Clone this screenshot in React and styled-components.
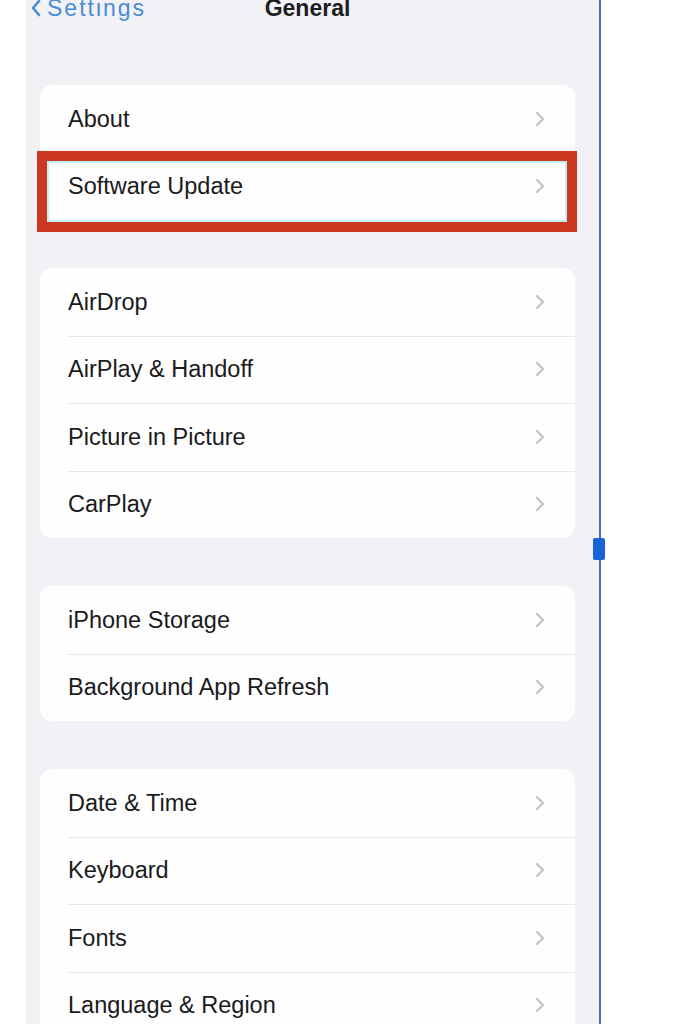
import React from 'react';
import styled, { createGlobalStyle, css } from 'styled-components';

const GlobalStyle = createGlobalStyle`
  html, body {
    margin: 0;
    padding: 0;
    background: #ffffff;
    font-family: 'Liberation Sans', Arial, sans-serif;
  }
`;

const PageStyled = styled.div`
  display: flex;
  height: 1024px;
  padding-left: 26px;
  overflow: hidden;
  background: #ffffff;
`;

const ScreenStyled = styled.div`
  position: relative;
  width: 575px;
  box-sizing: border-box;
  padding: 0 24px 0 14px;
  background: #f2f2f6;
  border-right: 2px solid #3f74b0;
`;

const HandleStyled = styled.div`
  position: absolute;
  top: 538px;
  right: -6px;
  width: 12px;
  height: 22px;
  border-radius: 2px;
  background: #1b63d9;
`;

const HeaderStyled = styled.header`
  display: grid;
  grid-template-columns: 1fr auto 1fr;
  align-items: center;
  height: 24px;
  margin-top: -4px;
  line-height: 24px;
  font-size: 23px;
`;

const BackStyled = styled.div`
  display: flex;
  align-items: center;
  gap: 6px;
  margin-left: -9px;
  color: #4a8bd6;
  letter-spacing: 2px;
`;

const TitleStyled = styled.div`
  font-weight: 700;
  color: #1d1d1f;
`;

const ListStyled = styled.div`
  display: flex;
  flex-direction: column;
  gap: 48px;
  margin-top: 65px;
`;

const CardStyled = styled.section`
  background: #fefefe;
  border-radius: 12px;
`;

const RowStyled = styled.div`
  position: relative;
  display: flex;
  align-items: center;
  height: 67.5px;
  padding: 0 30px 0 28px;

  & + &::before {
    content: '';
    position: absolute;
    top: 0;
    left: 28px;
    right: 0;
    height: 1px;
    background: #e8e8ec;
  }

  ${({ highlighted }) =>
    highlighted &&
    css`
      &::after {
        content: '';
        position: absolute;
        top: -2px;
        left: -3px;
        right: -2px;
        bottom: -12px;
        border: 10px solid #c9381f;
        box-shadow: inset 0 0 0 2px #bfeef6;
      }
    `}
`;

const LabelStyled = styled.span`
  flex: 1;
  font-size: 23.5px;
  color: #1a1a1c;
  padding-top: 1px;
`;

const Chevron = () => (
  <svg width="10" height="16" viewBox="0 0 10 16">
    <polyline points="2,2 8,8 2,14" fill="none" stroke="#c2c2c6" strokeWidth="2.2" strokeLinecap="round" strokeLinejoin="round" />
  </svg>
);

const BackChevron = () => (
  <svg width="10" height="18" viewBox="0 0 10 18">
    <polyline points="8,2 2,9 8,16" fill="none" stroke="#4a8bd6" strokeWidth="2.6" strokeLinecap="round" strokeLinejoin="round" />
  </svg>
);

const SECTIONS = [
  ['About', 'Software Update'],
  ['AirDrop', 'AirPlay & Handoff', 'Picture in Picture', 'CarPlay'],
  ['iPhone Storage', 'Background App Refresh'],
  ['Date & Time', 'Keyboard', 'Fonts', 'Language & Region'],
];

const App = () => (
  <>
    <GlobalStyle />
    <PageStyled>
      <ScreenStyled>
        <HeaderStyled>
          <BackStyled>
            <BackChevron />
            Settings
          </BackStyled>
          <TitleStyled>General</TitleStyled>
          <span />
        </HeaderStyled>
        <ListStyled>
          {SECTIONS.map((rows) => (
            <CardStyled key={rows[0]}>
              {rows.map((label) => (
                <RowStyled key={label} highlighted={label === 'Software Update'}>
                  <LabelStyled>{label}</LabelStyled>
                  <Chevron />
                </RowStyled>
              ))}
            </CardStyled>
          ))}
        </ListStyled>
        <HandleStyled />
      </ScreenStyled>
    </PageStyled>
  </>
);

export default App;
